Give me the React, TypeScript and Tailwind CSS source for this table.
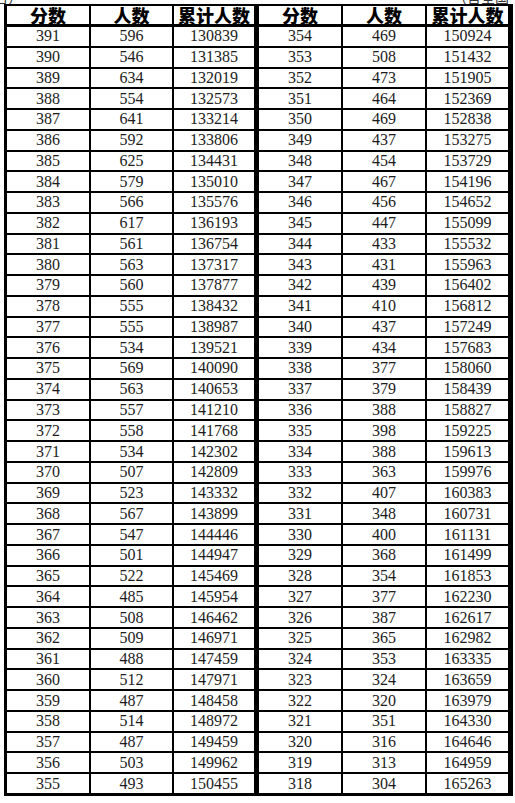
import React from "react";

const left: [number, number, number][] = [
  [391, 596, 130839], [390, 546, 131385], [389, 634, 132019], [388, 554, 132573],
  [387, 641, 133214], [386, 592, 133806], [385, 625, 134431], [384, 579, 135010],
  [383, 566, 135576], [382, 617, 136193], [381, 561, 136754], [380, 563, 137317],
  [379, 560, 137877], [378, 555, 138432], [377, 555, 138987], [376, 534, 139521],
  [375, 569, 140090], [374, 563, 140653], [373, 557, 141210], [372, 558, 141768],
  [371, 534, 142302], [370, 507, 142809], [369, 523, 143332], [368, 567, 143899],
  [367, 547, 144446], [366, 501, 144947], [365, 522, 145469], [364, 485, 145954],
  [363, 508, 146462], [362, 509, 146971], [361, 488, 147459], [360, 512, 147971],
  [359, 487, 148458], [358, 514, 148972], [357, 487, 149459], [356, 503, 149962],
  [355, 493, 150455],
];

const right: [number, number, number][] = [
  [354, 469, 150924], [353, 508, 151432], [352, 473, 151905], [351, 464, 152369],
  [350, 469, 152838], [349, 437, 153275], [348, 454, 153729], [347, 467, 154196],
  [346, 456, 154652], [345, 447, 155099], [344, 433, 155532], [343, 431, 155963],
  [342, 439, 156402], [341, 410, 156812], [340, 437, 157249], [339, 434, 157683],
  [338, 377, 158060], [337, 379, 158439], [336, 388, 158827], [335, 398, 159225],
  [334, 388, 159613], [333, 363, 159976], [332, 407, 160383], [331, 348, 160731],
  [330, 400, 161131], [329, 368, 161499], [328, 354, 161853], [327, 377, 162230],
  [326, 387, 162617], [325, 365, 162982], [324, 353, 163335], [323, 324, 163659],
  [322, 320, 163979], [321, 351, 164330], [320, 316, 164646], [319, 313, 164959],
  [318, 304, 165263],
];

const headers = ["分数", "人数", "累计人数"];

function Half({ rows, cols }: { rows: [number, number, number][]; cols: string }) {
  return (
    <div className="flex flex-col gap-[3px]">
      <div className={`grid ${cols} gap-x-[2px] h-[18px]`}>
        {headers.map((h) => (
          <div
            key={h}
            className="bg-white flex items-center justify-center overflow-visible text-[18px] leading-[18px] font-black text-black font-['Noto_Sans_CJK_SC',sans-serif]"
          >
            {h}
          </div>
        ))}
      </div>
      <div className={`grid ${cols} grid-rows-[repeat(37,minmax(0,1fr))] gap-x-[2px] gap-y-[2px] h-[766px]`}>
        {rows.map((r) =>
          r.map((v, i) => (
            <div
              key={`${r[0]}-${i}`}
              className="bg-white flex items-center justify-center text-[16px] leading-none text-[#1c1c1c] font-['Liberation_Serif',serif]"
            >
              {v}
            </div>
          ))
        )}
      </div>
    </div>
  );
}

export default function App() {
  return (
    <div className="w-[515px] h-[803px] bg-white overflow-hidden">
      <div className="h-[4px] overflow-hidden flex justify-between text-[14px] leading-[14px] text-[#333] font-['Noto_Sans_CJK_SC',sans-serif]">
        <span className="-mt-[10px] -ml-[6px]">名）</span>
        <span className="-mt-[10px] pr-[6px]">（含全国</span>
      </div>
      <div className="ml-[4px] w-[509px] bg-black pt-[2px] pl-[3px] pr-[5px] pb-[3px] flex gap-[5px]">
        <Half rows={left} cols="grid-cols-[82px_81px_80px]" />
        <Half rows={right} cols="grid-cols-[82px_82px_81px]" />
      </div>
    </div>
  );
}
